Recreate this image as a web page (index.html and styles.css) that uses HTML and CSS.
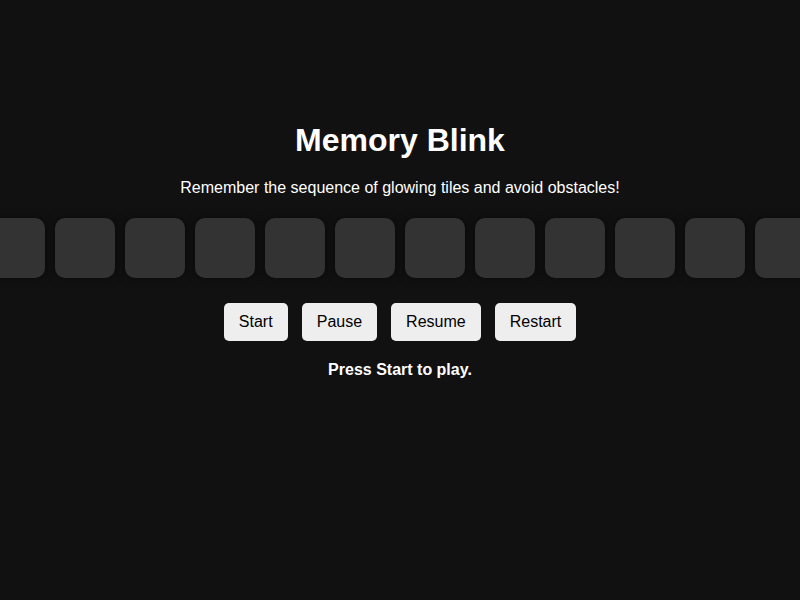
FILE: index.html
```html
<!DOCTYPE html>
<html lang="en">
<head>
<meta charset="utf-8">
<title>Memory Blink</title>
<link rel="stylesheet" href="styles.css">
</head>
<body>
<main class="game">
  <h1 class="title">Memory Blink</h1>
  <p class="subtitle">Remember the sequence of glowing tiles and avoid obstacles!</p>
  <div class="board">
    <div class="tile"></div><div class="tile"></div><div class="tile"></div><div class="tile"></div>
    <div class="tile"></div><div class="tile"></div><div class="tile"></div><div class="tile"></div>
    <div class="tile"></div><div class="tile"></div><div class="tile"></div><div class="tile"></div>
  </div>
  <div class="controls">
    <button class="btn">Start</button>
    <button class="btn">Pause</button>
    <button class="btn">Resume</button>
    <button class="btn">Restart</button>
  </div>
  <p class="status">Press Start to play.</p>
</main>
</body>
</html>
```
FILE: styles.css
```css
html, body {
  margin: 0;
  padding: 0;
  background: #111111;
  color: #ffffff;
  font-family: "Liberation Sans", Arial, sans-serif;
  overflow: hidden;
}
.game {
  display: flex;
  flex-direction: column;
  align-items: center;
  padding-top: 122px;
}
.title {
  margin: 0;
  font-size: 32px;
  line-height: 37px;
  font-weight: bold;
}
.subtitle {
  margin: 20px 0 0;
  font-size: 16px;
  line-height: 18px;
}
.board {
  margin-top: 21px;
  display: flex;
  gap: 10px;
  justify-content: center;
  width: 800px;
}
.tile {
  flex: 0 0 60px;
  width: 60px;
  height: 60px;
  background: #333333;
  border-radius: 10px;
  box-shadow: 0 0 10px rgba(0, 0, 0, 0.5);
}
.controls {
  margin-top: 25px;
  display: flex;
  gap: 14px;
}
.btn {
  font-family: "Liberation Sans", Arial, sans-serif;
  font-size: 16px;
  line-height: 18px;
  padding: 10px 15px;
  min-width: 64px;
  border: none;
  border-radius: 5px;
  background: #eeeeee;
  color: #000000;
}
.status {
  margin: 20px 0 0;
  font-size: 16px;
  line-height: 18px;
  font-weight: bold;
}
```
